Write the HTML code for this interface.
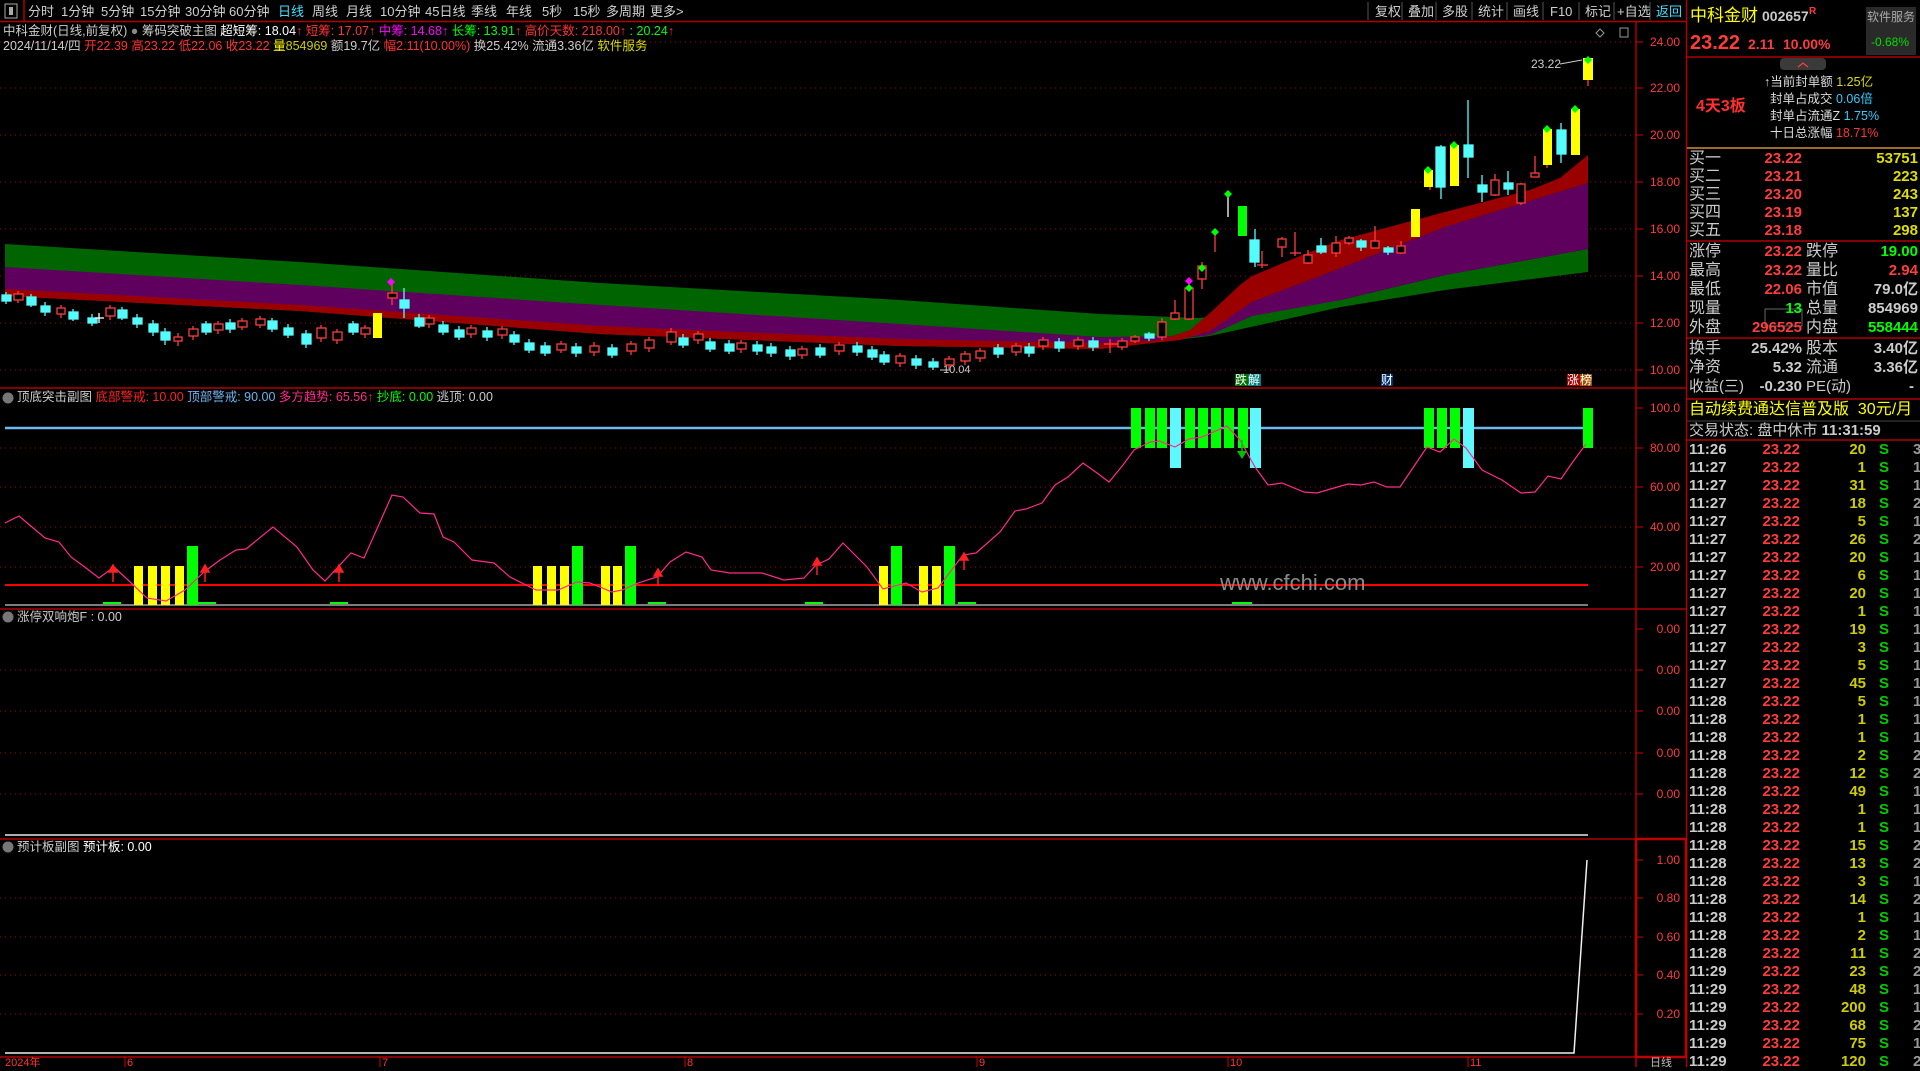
<!DOCTYPE html>
<html><head><meta charset="utf-8">
<style>
*{margin:0;padding:0;box-sizing:border-box}
body{width:1920px;height:1067px;background:#000;overflow:hidden;position:relative;font-family:"Liberation Sans","Noto Sans CJK SC",sans-serif;color:#c8c8c8}
.a{position:absolute;white-space:nowrap;line-height:1}
.m{font-size:13px;top:5px;color:#d0d0d0}
.row{position:absolute;left:1687px;width:233px;height:18px;font-size:15px;line-height:18px;font-weight:bold}
.row span{position:absolute;white-space:nowrap}
.ax{position:absolute;font-size:12px;color:#ff3c3c;right:240px;line-height:1}
</style></head><body>
<svg width="1920" height="1067" style="position:absolute;left:0;top:0">
<g stroke="#b00000" stroke-width="1.5" fill="none">
<line x1="0" y1="21.5" x2="1686" y2="21.5"/>
<line x1="24" y1="0" x2="24" y2="21"/>
<line x1="0" y1="388" x2="1686" y2="388"/>
<line x1="0" y1="609" x2="1686" y2="609"/>
<line x1="0" y1="839" x2="1636" y2="839"/>
<line x1="0" y1="1057" x2="1686" y2="1057"/>
<line x1="1636" y1="22" x2="1636" y2="1067"/>
<line x1="1686.5" y1="0" x2="1686.5" y2="1067"/>
<rect x="1636" y="839" width="50" height="218" stroke="#c00000" stroke-width="2.5"/>
<line x1="1687" y1="57" x2="1920" y2="57"/>
<line x1="1687" y1="241" x2="1920" y2="241"/>
<line x1="1687" y1="338" x2="1920" y2="338"/>
<line x1="1687" y1="399" x2="1920" y2="399"/>
<line x1="1687" y1="440" x2="1920" y2="440"/>
</g>
<line x1="1687" y1="148" x2="1920" y2="148" stroke="#d09030" stroke-width="1.5"/>
<line x1="1687" y1="421" x2="1920" y2="421" stroke="#444" stroke-width="1"/>
<g stroke="#555" stroke-width="1">
<line x1="1368" y1="2" x2="1368" y2="20"/><line x1="1402" y1="2" x2="1402" y2="20"/><line x1="1436" y1="2" x2="1436" y2="20"/><line x1="1472" y1="2" x2="1472" y2="20"/><line x1="1507" y1="2" x2="1507" y2="20"/><line x1="1543" y1="2" x2="1543" y2="20"/><line x1="1579" y1="2" x2="1579" y2="20"/><line x1="1614" y1="2" x2="1614" y2="20"/><line x1="1650" y1="2" x2="1650" y2="20"/>
</g>
<rect x="5" y="4" width="12" height="14" fill="none" stroke="#aaa"/><rect x="9" y="7" width="4" height="8" fill="#aaa"/>
<g stroke="#a00000" stroke-width="1" stroke-dasharray="1,4">
<line x1="0" y1="42" x2="1636" y2="42"/><line x1="0" y1="88" x2="1636" y2="88"/><line x1="0" y1="135" x2="1636" y2="135"/><line x1="0" y1="182" x2="1636" y2="182"/><line x1="0" y1="229" x2="1636" y2="229"/><line x1="0" y1="276" x2="1636" y2="276"/><line x1="0" y1="323" x2="1636" y2="323"/><line x1="0" y1="370" x2="1636" y2="370"/>
<line x1="0" y1="448" x2="1636" y2="448"/><line x1="0" y1="487" x2="1636" y2="487"/><line x1="0" y1="527" x2="1636" y2="527"/><line x1="0" y1="567" x2="1636" y2="567"/>
<line x1="0" y1="670" x2="1636" y2="670"/><line x1="0" y1="711" x2="1636" y2="711"/><line x1="0" y1="753" x2="1636" y2="753"/><line x1="0" y1="794" x2="1636" y2="794"/>
<line x1="0" y1="898" x2="1636" y2="898"/><line x1="0" y1="937" x2="1636" y2="937"/><line x1="0" y1="975" x2="1636" y2="975"/><line x1="0" y1="1014" x2="1636" y2="1014"/>
</g>
<g stroke="#d00000" stroke-width="1">
<line x1="1636" y1="42" x2="1643" y2="42"/><line x1="1636" y1="88" x2="1643" y2="88"/><line x1="1636" y1="135" x2="1643" y2="135"/><line x1="1636" y1="182" x2="1643" y2="182"/><line x1="1636" y1="229" x2="1643" y2="229"/><line x1="1636" y1="276" x2="1643" y2="276"/><line x1="1636" y1="323" x2="1643" y2="323"/><line x1="1636" y1="370" x2="1643" y2="370"/>
<line x1="1636" y1="408" x2="1643" y2="408"/><line x1="1636" y1="448" x2="1643" y2="448"/><line x1="1636" y1="487" x2="1643" y2="487"/><line x1="1636" y1="527" x2="1643" y2="527"/><line x1="1636" y1="567" x2="1643" y2="567"/>
<line x1="1636" y1="629" x2="1643" y2="629"/><line x1="1636" y1="670" x2="1643" y2="670"/><line x1="1636" y1="711" x2="1643" y2="711"/><line x1="1636" y1="753" x2="1643" y2="753"/><line x1="1636" y1="794" x2="1643" y2="794"/>
<line x1="1636" y1="860" x2="1643" y2="860"/><line x1="1636" y1="898" x2="1643" y2="898"/><line x1="1636" y1="937" x2="1643" y2="937"/><line x1="1636" y1="975" x2="1643" y2="975"/><line x1="1636" y1="1014" x2="1643" y2="1014"/>
<line x1="125" y1="1057" x2="125" y2="1067"/><line x1="380" y1="1057" x2="380" y2="1067"/><line x1="685" y1="1057" x2="685" y2="1067"/><line x1="977" y1="1057" x2="977" y2="1067"/><line x1="1228" y1="1057" x2="1228" y2="1067"/><line x1="1468" y1="1057" x2="1468" y2="1067"/>
</g>
<polygon fill="#006400" points="5,244 300,262 600,283 900,300 1100,314 1200,318 1300,305 1341,300 1445,275 1588,249 1588,272 1445,290 1341,307 1210,336 1100,349 900,346 600,334 300,311 5,296"/>
<polygon fill="#5f005f" points="5,267 300,285 600,305 900,324 1100,337 1180,336 1210,330 1252,302 1341,268 1445,227 1588,183 1588,249 1445,275 1341,300 1252,316 1210,335 1100,349 900,346 600,334 300,311 5,296"/>
<polygon fill="#9a0000" points="5,289 300,305 600,326 900,339 1100,343 1160,340 1190,330 1210,313 1240,285 1252,276 1300,256 1341,240 1445,212 1530,190 1560,178 1588,155 1588,183 1445,227 1341,268 1252,302 1210,331 1180,340 1100,349 900,346 600,334 300,311 5,296"/>
<g stroke="#54fcfc" fill="#54fcfc" stroke-width="1.3">
<line x1="6" y1="292" x2="6" y2="304"/><rect x="2" y="295" width="9" height="6"/>
<line x1="31" y1="294" x2="31" y2="307"/><rect x="27" y="297" width="9" height="8"/>
<line x1="45" y1="302" x2="45" y2="316"/><rect x="41" y="306" width="9" height="6"/>
<line x1="73" y1="309" x2="73" y2="321"/><rect x="69" y="312" width="9" height="7"/>
<line x1="92" y1="314" x2="92" y2="326"/><rect x="88" y="318" width="9" height="5"/>
<line x1="122" y1="307" x2="122" y2="320"/><rect x="118" y="310" width="9" height="8"/>
<line x1="137" y1="314" x2="137" y2="328"/><rect x="133" y="318" width="9" height="6"/>
<line x1="153" y1="320" x2="153" y2="336"/><rect x="149" y="324" width="9" height="8"/>
<line x1="165" y1="328" x2="165" y2="345"/><rect x="161" y="332" width="9" height="8"/>
<line x1="206" y1="321" x2="206" y2="335"/><rect x="202" y="324" width="9" height="8"/>
<line x1="230" y1="319" x2="230" y2="333"/><rect x="226" y="323" width="9" height="6"/>
<line x1="272" y1="318" x2="272" y2="332"/><rect x="268" y="321" width="9" height="8"/>
<line x1="288" y1="324" x2="288" y2="338"/><rect x="284" y="328" width="9" height="7"/>
<line x1="306" y1="330" x2="306" y2="348"/><rect x="302" y="334" width="9" height="10"/>
<line x1="353" y1="321" x2="353" y2="335"/><rect x="349" y="324" width="9" height="8"/>
<line x1="404" y1="288" x2="404" y2="318"/><rect x="400" y="300" width="9" height="8"/>
<line x1="419" y1="314" x2="419" y2="328"/><rect x="415" y="318" width="9" height="8"/>
<line x1="443" y1="321" x2="443" y2="335"/><rect x="439" y="325" width="9" height="7"/>
<line x1="459" y1="326" x2="459" y2="340"/><rect x="455" y="330" width="9" height="7"/>
<line x1="487" y1="327" x2="487" y2="341"/><rect x="483" y="331" width="9" height="6"/>
<line x1="514" y1="331" x2="514" y2="345"/><rect x="510" y="335" width="9" height="7"/>
<line x1="529" y1="339" x2="529" y2="353"/><rect x="525" y="343" width="9" height="7"/>
<line x1="545" y1="342" x2="545" y2="356"/><rect x="541" y="346" width="9" height="7"/>
<line x1="576" y1="343" x2="576" y2="357"/><rect x="572" y="347" width="9" height="6"/>
<line x1="612" y1="344" x2="612" y2="358"/><rect x="608" y="348" width="9" height="7"/>
<line x1="683" y1="334" x2="683" y2="348"/><rect x="679" y="338" width="9" height="7"/>
<line x1="710" y1="338" x2="710" y2="352"/><rect x="706" y="342" width="9" height="7"/>
<line x1="729" y1="340" x2="729" y2="354"/><rect x="725" y="344" width="9" height="7"/>
<line x1="757" y1="341" x2="757" y2="355"/><rect x="753" y="345" width="9" height="6"/>
<line x1="771" y1="343" x2="771" y2="357"/><rect x="767" y="347" width="9" height="6"/>
<line x1="790" y1="346" x2="790" y2="360"/><rect x="786" y="350" width="9" height="6"/>
<line x1="820" y1="344" x2="820" y2="358"/><rect x="816" y="348" width="9" height="7"/>
<line x1="857" y1="342" x2="857" y2="356"/><rect x="853" y="346" width="9" height="6"/>
<line x1="872" y1="346" x2="872" y2="360"/><rect x="868" y="350" width="9" height="7"/>
<line x1="884" y1="351" x2="884" y2="365"/><rect x="880" y="355" width="9" height="7"/>
<line x1="916" y1="355" x2="916" y2="369"/><rect x="912" y="359" width="9" height="6"/>
<line x1="933" y1="358" x2="933" y2="370"/><rect x="929" y="362" width="9" height="5"/>
<line x1="998" y1="344" x2="998" y2="358"/><rect x="994" y="348" width="9" height="6"/>
<line x1="1029" y1="343" x2="1029" y2="357"/><rect x="1025" y="347" width="9" height="6"/>
<line x1="1059" y1="338" x2="1059" y2="352"/><rect x="1055" y="342" width="9" height="6"/>
<line x1="1093" y1="337" x2="1093" y2="351"/><rect x="1089" y="341" width="9" height="6"/>
<line x1="1149" y1="332" x2="1149" y2="341"/><rect x="1145" y="334" width="9" height="4"/>
<line x1="1255" y1="229" x2="1255" y2="267"/><rect x="1250" y="240" width="9" height="22"/>
<line x1="1321" y1="238" x2="1321" y2="254"/><rect x="1317" y="246" width="9" height="6"/>
<line x1="1361" y1="239" x2="1361" y2="251"/><rect x="1357" y="241" width="9" height="6"/>
<line x1="1388" y1="246" x2="1388" y2="255"/><rect x="1384" y="248" width="9" height="4"/>
<line x1="1441" y1="145" x2="1441" y2="199"/><rect x="1436" y="147" width="9" height="40"/>
<line x1="1468" y1="100" x2="1468" y2="178"/><rect x="1464" y="145" width="9" height="12"/>
<line x1="1482" y1="175" x2="1482" y2="202"/><rect x="1478" y="185" width="9" height="7"/>
<line x1="1508" y1="171" x2="1508" y2="195"/><rect x="1504" y="183" width="9" height="6"/>
<line x1="1561" y1="123" x2="1561" y2="163"/><rect x="1557" y="130" width="9" height="24"/>
</g>
<g stroke="#ff3c3c" fill="#000" stroke-width="1.3">
<line x1="18" y1="291" x2="18" y2="303"/><rect x="14" y="294" width="9" height="6"/>
<line x1="61" y1="305" x2="61" y2="318"/><rect x="57" y="308" width="8" height="6"/>
<line x1="110" y1="305" x2="110" y2="320"/><rect x="106" y="308" width="9" height="8"/>
<line x1="178" y1="333" x2="178" y2="346"/><rect x="174" y="337" width="8" height="4"/>
<line x1="193" y1="326" x2="193" y2="340"/><rect x="189" y="329" width="9" height="7"/>
<line x1="218" y1="321" x2="218" y2="334"/><rect x="214" y="324" width="9" height="6"/>
<line x1="242" y1="318" x2="242" y2="330"/><rect x="238" y="321" width="9" height="6"/>
<line x1="260" y1="316" x2="260" y2="328"/><rect x="256" y="319" width="9" height="6"/>
<line x1="321" y1="325" x2="321" y2="342"/><rect x="317" y="328" width="9" height="10"/>
<line x1="337" y1="329" x2="337" y2="344"/><rect x="333" y="332" width="9" height="8"/>
<line x1="365" y1="325" x2="365" y2="338"/><rect x="361" y="328" width="9" height="6"/>
<line x1="392" y1="282" x2="392" y2="305"/><rect x="388" y="293" width="9" height="5"/>
<line x1="429" y1="315" x2="429" y2="328"/><rect x="425" y="318" width="9" height="6"/>
<line x1="471" y1="325" x2="471" y2="338"/><rect x="467" y="328" width="9" height="6"/>
<line x1="502" y1="326" x2="502" y2="339"/><rect x="498" y="329" width="9" height="6"/>
<line x1="561" y1="341" x2="561" y2="353"/><rect x="557" y="344" width="9" height="6"/>
<line x1="594" y1="342" x2="594" y2="356"/><rect x="590" y="346" width="9" height="6"/>
<line x1="631" y1="341" x2="631" y2="355"/><rect x="627" y="344" width="9" height="7"/>
<line x1="649" y1="337" x2="649" y2="352"/><rect x="645" y="340" width="9" height="8"/>
<line x1="671" y1="328" x2="671" y2="345"/><rect x="667" y="332" width="9" height="10"/>
<line x1="698" y1="331" x2="698" y2="344"/><rect x="694" y="334" width="9" height="6"/>
<line x1="741" y1="340" x2="741" y2="353"/><rect x="737" y="343" width="9" height="6"/>
<line x1="802" y1="346" x2="802" y2="359"/><rect x="798" y="349" width="9" height="6"/>
<line x1="839" y1="342" x2="839" y2="355"/><rect x="835" y="345" width="9" height="6"/>
<line x1="900" y1="353" x2="900" y2="367"/><rect x="896" y="356" width="9" height="7"/>
<line x1="949" y1="356" x2="949" y2="369"/><rect x="945" y="359" width="9" height="6"/>
<line x1="965" y1="351" x2="965" y2="365"/><rect x="961" y="354" width="9" height="7"/>
<line x1="980" y1="348" x2="980" y2="362"/><rect x="976" y="351" width="9" height="7"/>
<line x1="1016" y1="343" x2="1016" y2="356"/><rect x="1012" y="346" width="9" height="6"/>
<line x1="1043" y1="337" x2="1043" y2="350"/><rect x="1039" y="340" width="9" height="6"/>
<line x1="1078" y1="337" x2="1078" y2="350"/><rect x="1074" y="340" width="9" height="6"/>
<line x1="1104" y1="344" x2="1118" y2="344"/><line x1="1110" y1="339" x2="1110" y2="353"/>
<line x1="1122" y1="338" x2="1122" y2="350"/><rect x="1118" y="341" width="9" height="6"/>
<line x1="1135" y1="335" x2="1135" y2="343"/><rect x="1131" y="337" width="8" height="4"/>
<line x1="1162" y1="318" x2="1162" y2="340"/><rect x="1158" y="322" width="8" height="15"/>
<line x1="1175" y1="300" x2="1175" y2="320"/><rect x="1171" y="313" width="8" height="6"/>
<line x1="1189" y1="282" x2="1189" y2="320"/><rect x="1185" y="288" width="8" height="31"/>
<line x1="1202" y1="262" x2="1202" y2="289"/><rect x="1198" y="266" width="8" height="13"/>
<line x1="1215" y1="232" x2="1215" y2="252"/>
<line x1="1262" y1="251" x2="1262" y2="268"/><line x1="1257" y1="265" x2="1268" y2="265"/>
<line x1="1282" y1="237" x2="1282" y2="257"/><rect x="1278" y="239" width="8" height="8"/>
<line x1="1295" y1="232" x2="1295" y2="256"/><line x1="1290" y1="253" x2="1301" y2="253"/>
<line x1="1308" y1="250" x2="1308" y2="264"/><rect x="1304" y="255" width="8" height="8"/>
<line x1="1336" y1="236" x2="1336" y2="257"/><rect x="1332" y="243" width="8" height="10"/>
<line x1="1349" y1="236" x2="1349" y2="245"/><rect x="1345" y="238" width="8" height="5"/>
<line x1="1375" y1="226" x2="1375" y2="248"/><rect x="1371" y="241" width="8" height="7"/>
<line x1="1401" y1="241" x2="1401" y2="254"/><rect x="1397" y="246" width="8" height="7"/>
<line x1="1495" y1="174" x2="1495" y2="196"/><rect x="1491" y="180" width="8" height="15"/>
<line x1="1521" y1="183" x2="1521" y2="205"/><rect x="1517" y="184" width="8" height="19"/>
<line x1="1535" y1="156" x2="1535" y2="177"/><rect x="1531" y="173" width="8" height="4"/>
<line x1="1430" y1="186" x2="1430" y2="190"/><line x1="1588" y1="78" x2="1588" y2="86"/><line x1="1547" y1="164" x2="1547" y2="168"/>
</g>
<line x1="95" y1="318" x2="104" y2="318" stroke="#fff" stroke-width="1.3"/><line x1="99" y1="313" x2="99" y2="323" stroke="#fff" stroke-width="1.3"/>
<line x1="1228" y1="193" x2="1228" y2="217" stroke="#fff" stroke-width="1.3"/>
<g fill="#ffff00">
<rect x="373" y="313" width="9" height="25"/>
<rect x="1411" y="209" width="9" height="28"/>
<rect x="1424" y="170" width="9" height="17"/>
<rect x="1450" y="145" width="9" height="41"/>
<rect x="1543" y="129" width="9" height="36"/>
<rect x="1571" y="109" width="9" height="46"/>
<rect x="1583" y="58" width="10" height="22"/>
</g>
<rect x="1238" y="206" width="9" height="30" fill="#00ff00"/>
<g fill="#00ff00">
<polygon points="1189,284 1193,288 1189,292 1185,288"/><polygon points="1202,264 1206,268 1202,272 1198,268"/><polygon points="1215,228 1219,232 1215,236 1211,232"/><polygon points="1228,190 1232,194 1228,198 1224,194"/><polygon points="1428,166 1432,170 1428,174 1424,170"/><polygon points="1454,141 1458,145 1454,149 1450,145"/><polygon points="1547,125 1551,129 1547,133 1543,129"/><polygon points="1575,105 1579,109 1575,113 1571,109"/><polygon points="1588,56 1592,60 1588,64 1584,60"/>
</g>
<g fill="#ff00ff"><polygon points="1189,277 1193,281 1189,285 1185,281"/><polygon points="391,278 395,282 391,286 387,282"/></g>
<line x1="1560" y1="64" x2="1582" y2="60" stroke="#ccc" stroke-width="1"/>
<line x1="940" y1="370" x2="950" y2="370" stroke="#ccc" stroke-width="1"/>
<line x1="5" y1="428" x2="1590" y2="428" stroke="#6fb8f0" stroke-width="2.5"/>
<line x1="5" y1="585" x2="1588" y2="585" stroke="#ff0000" stroke-width="2"/>
<line x1="5" y1="605" x2="1588" y2="605" stroke="#c8c8c8" stroke-width="1.3"/>
<g fill="#00ff00"><rect x="103" y="602" width="18" height="2"/><rect x="198" y="602" width="18" height="2"/><rect x="330" y="602" width="18" height="2"/><rect x="648" y="602" width="18" height="2"/><rect x="805" y="602" width="18" height="2"/><rect x="958" y="602" width="18" height="2"/><rect x="1232" y="602" width="20" height="2"/></g>
<g fill="#ffff00">
<rect x="134" y="566" width="9" height="39"/><rect x="148" y="566" width="9" height="39"/><rect x="161" y="566" width="9" height="39"/><rect x="175" y="566" width="9" height="39"/>
<rect x="533" y="566" width="9" height="39"/><rect x="547" y="566" width="9" height="39"/><rect x="560" y="566" width="9" height="39"/><rect x="601" y="566" width="9" height="39"/><rect x="613" y="566" width="9" height="39"/>
<rect x="879" y="566" width="9" height="39"/><rect x="919" y="566" width="9" height="39"/><rect x="932" y="566" width="9" height="39"/>
</g>
<g fill="#00ff00">
<rect x="187" y="546" width="11" height="59"/><rect x="572" y="546" width="11" height="59"/><rect x="625" y="546" width="11" height="59"/><rect x="891" y="546" width="11" height="59"/><rect x="944" y="546" width="11" height="59"/>
<rect x="1131" y="408" width="10" height="40"/><rect x="1145" y="408" width="10" height="40"/><rect x="1157" y="408" width="10" height="40"/><rect x="1185" y="408" width="10" height="40"/><rect x="1198" y="408" width="10" height="40"/><rect x="1211" y="408" width="10" height="40"/><rect x="1224" y="408" width="10" height="40"/><rect x="1238" y="408" width="10" height="40"/>
<rect x="1424" y="408" width="10" height="40"/><rect x="1437" y="408" width="10" height="40"/><rect x="1450" y="408" width="10" height="40"/><rect x="1583" y="408" width="10" height="40"/>
</g>
<g fill="#5ff8ff"><rect x="1170" y="408" width="11" height="60"/><rect x="1250" y="408" width="11" height="60"/><rect x="1463" y="408" width="11" height="60"/></g>
<polyline fill="none" stroke="#ff2a8a" stroke-width="1.2" points="5,523 19,516 32,527 45,538 59,542 71,557 86,568 99,578 114,567 128,580 147,598 166,601 185,590 204,572 220,560 236,550 246,549 273,527 297,547 313,570 325,581 351,553 364,558 392,495 403,497 420,513 434,514 443,537 454,542 472,560 494,563 510,577 536,590 558,590 577,582 590,583 612,592 622,590 638,583 657,577 670,562 686,552 702,557 711,570 730,573 762,573 784,580 804,578 816,565 829,559 843,543 867,567 883,589 906,583 922,592 938,588 963,555 976,553 1000,532 1015,511 1026,509 1042,503 1055,485 1068,477 1083,463 1097,473 1109,482 1123,465 1134,450 1150,442 1159,441 1175,447 1189,439 1202,437 1227,426 1240,440 1255,467 1268,485 1282,483 1304,492 1317,493 1334,488 1348,484 1361,485 1374,482 1387,487 1400,487 1427,447 1440,452 1454,439 1466,448 1482,470 1502,480 1521,493 1535,492 1548,476 1561,479 1572,463 1586,444"/>
<g stroke="#ff2020" fill="#ff2020" stroke-width="1.5">
<line x1="113" y1="571" x2="113" y2="582"/><polygon points="113,565 109,572 117,572"/>
<line x1="205" y1="571" x2="205" y2="582"/><polygon points="205,565 201,572 209,572"/>
<line x1="339" y1="571" x2="339" y2="582"/><polygon points="339,565 335,572 343,572"/>
<line x1="658" y1="575" x2="658" y2="586"/><polygon points="658,569 654,576 662,576"/>
<line x1="817" y1="564" x2="817" y2="575"/><polygon points="817,558 813,565 821,565"/>
<line x1="964" y1="559" x2="964" y2="570"/><polygon points="964,553 960,560 968,560"/>
</g>
<line x1="1242" y1="440" x2="1242" y2="452" stroke="#00c000" stroke-width="1.5"/><polygon points="1242,459 1237,451 1247,451" fill="#00c000"/>
<line x1="5" y1="835" x2="1588" y2="835" stroke="#e8e8e8" stroke-width="1.5"/>
<polyline fill="none" stroke="#f0f0f0" stroke-width="1.5" points="5,1053 1574,1053 1587,860"/>
<rect x="1866" y="7" width="50" height="48" fill="#2a2a2a"/>
<rect x="1780" y="58" width="46" height="12" rx="4" fill="#3a3a3a"/>
<polyline points="1798,67 1803,63 1808,67" fill="none" stroke="#ff3c3c" stroke-width="1.2"/>
<rect x="1765" y="309" width="37" height="17" fill="none" stroke="#666"/>
<circle cx="8" cy="398" r="5.5" fill="#777"/><circle cx="8" cy="617" r="5.5" fill="#777"/><circle cx="8" cy="847" r="5.5" fill="#777"/>
<polygon points="1600,29 1604,33 1600,37 1596,33" fill="none" stroke="#999"/>
<rect x="1620" y="28" width="8" height="9" fill="none" stroke="#999"/>
</svg>

<div class="a m" style="left:28px">分时</div><div class="a m" style="left:61px">1分钟</div><div class="a m" style="left:101px">5分钟</div><div class="a m" style="left:140px">15分钟</div><div class="a m" style="left:185px">30分钟</div><div class="a m" style="left:229px">60分钟</div><div class="a m" style="left:278px;color:#40e0ff">日线</div><div class="a m" style="left:312px">周线</div><div class="a m" style="left:346px">月线</div><div class="a m" style="left:380px">10分钟</div><div class="a m" style="left:425px">45日线</div><div class="a m" style="left:471px">季线</div><div class="a m" style="left:506px">年线</div><div class="a m" style="left:542px">5秒</div><div class="a m" style="left:573px">15秒</div><div class="a m" style="left:606px">多周期</div><div class="a m" style="left:650px">更多&gt;</div>
<div class="a m" style="left:1375px">复权</div><div class="a m" style="left:1408px">叠加</div><div class="a m" style="left:1442px">多股</div><div class="a m" style="left:1478px">统计</div><div class="a m" style="left:1513px">画线</div><div class="a m" style="left:1550px">F10</div><div class="a m" style="left:1585px">标记</div><div class="a m" style="left:1617px">+自选</div><div class="a m" style="left:1656px;color:#40e0ff">返回</div>

<div class="a" style="left:3px;top:25px;font-size:12.5px;color:#ccc">中科金财(日线,前复权) <span style="color:#888">●</span> 筹码突破主图 <span style="color:#fff">超短筹: 18.04</span><span style="color:#f33">↑</span> <span style="color:#f33">短筹: 17.07↑</span> <span style="color:#f0f">中筹: 14.68↑</span> <span style="color:#0f0">长筹: 13.91</span><span style="color:#f33">↑</span> <span style="color:#f33">高价天数: 218.00↑</span> <span style="color:#0f0">: 20.24</span><span style="color:#f33">↑</span></div>
<div class="a" style="left:3px;top:40px;font-size:12.5px;color:#ccc">2024/11/14/四 <span style="color:#f33">开22.39 高23.22 低22.06 收23.22</span> <span style="color:#ff0">量</span><span style="color:#cc0">854969</span> 额19.7亿 <span style="color:#f33">幅2.11(10.00%)</span> 换25.42% 流通3.36亿 <span style="color:#dd0">软件服务</span></div>

<div class="a" style="left:1531px;top:58px;font-size:12px;color:#ccc">23.22</div>
<div class="a" style="left:943px;top:365px;font-size:11px;color:#ccc">10.04</div>
<div class="a" style="left:1235px;top:374px;font-size:12px;color:#fff;background:#007000;width:13px">跌</div><div class="a" style="left:1248px;top:374px;font-size:12px;color:#fff;background:#008080;width:13px">解</div>
<div class="a" style="left:1381px;top:374px;font-size:12px;color:#fff;background:#003070">财</div>
<div class="a" style="left:1567px;top:374px;font-size:12px;color:#fff;background:#a00000;width:13px">涨</div><div class="a" style="left:1580px;top:374px;font-size:12px;color:#fff;background:#a05000">榜</div>

<div class="a" style="left:17px;top:391px;font-size:12.5px;color:#ccc">顶底突击副图 <span style="color:#f22">底部警戒: 10.00</span> <span style="color:#6ab4f0">顶部警戒: 90.00</span> <span style="color:#ff2a8a">多方趋势: 65.56</span><span style="color:#f22">↑</span> <span style="color:#0f0">抄底: 0.00</span> 逃顶: 0.00</div>
<div class="a" style="left:1220px;top:572px;font-size:22px;color:#8a8a8a">www.cfchi.com</div>
<div class="a" style="left:17px;top:611px;font-size:12.5px;color:#ccc">涨停双响炮F : 0.00</div>
<div class="a" style="left:17px;top:841px;font-size:12.5px;color:#ccc">预计板副图 <span style="color:#fff">预计板: 0.00</span></div>

<div class="ax" style="top:36px">24.00</div><div class="ax" style="top:82px">22.00</div><div class="ax" style="top:129px">20.00</div><div class="ax" style="top:176px">18.00</div><div class="ax" style="top:223px">16.00</div><div class="ax" style="top:270px">14.00</div><div class="ax" style="top:317px">12.00</div><div class="ax" style="top:364px">10.00</div>
<div class="ax" style="top:402px">100.0</div><div class="ax" style="top:442px">80.00</div><div class="ax" style="top:481px">60.00</div><div class="ax" style="top:521px">40.00</div><div class="ax" style="top:561px">20.00</div>
<div class="ax" style="top:623px">0.00</div><div class="ax" style="top:664px">0.00</div><div class="ax" style="top:705px">0.00</div><div class="ax" style="top:747px">0.00</div><div class="ax" style="top:788px">0.00</div>
<div class="ax" style="top:854px">1.00</div><div class="ax" style="top:892px">0.80</div><div class="ax" style="top:931px">0.60</div><div class="ax" style="top:969px">0.40</div><div class="ax" style="top:1008px">0.20</div>
<div class="a" style="left:5px;top:1058px;font-size:11px;color:#f33">2024年</div><div class="a" style="left:127px;top:1058px;font-size:11px;color:#f33">6</div><div class="a" style="left:382px;top:1058px;font-size:11px;color:#f33">7</div><div class="a" style="left:687px;top:1058px;font-size:11px;color:#f33">8</div><div class="a" style="left:979px;top:1058px;font-size:11px;color:#f33">9</div><div class="a" style="left:1230px;top:1058px;font-size:11px;color:#f33">10</div><div class="a" style="left:1470px;top:1058px;font-size:11px;color:#f33">11</div><div class="a" style="left:1650px;top:1058px;font-size:11px;color:#bbb">日线</div>

<div class="a" style="left:1690px;top:7px;font-size:17px;color:#ffff00">中科金财</div>
<div class="a" style="left:1762px;top:9px;font-size:14px;font-weight:bold;color:#c8c8c8">002657</div>
<div class="a" style="left:1809px;top:7px;font-size:10px;font-weight:bold;color:#ff3c3c">R</div>
<div class="a" style="left:1867px;top:11px;font-size:12px;color:#aaa">软件服务</div>
<div class="a" style="left:1871px;top:36px;font-size:12px;color:#00e000">-0.68%</div>
<div class="a" style="left:1690px;top:33px;font-size:20px;font-weight:bold;color:#ff3c3c">23.22</div>
<div class="a" style="left:1748px;top:37px;font-size:14px;font-weight:bold;color:#ff3c3c">2.11</div>
<div class="a" style="left:1783px;top:37px;font-size:14px;font-weight:bold;color:#ff3c3c">10.00%</div>
<div class="a" style="left:1696px;top:99px;font-size:16px;font-weight:bold;color:#ff3030">4天3板</div>
<div class="a" style="left:1764px;top:76px;font-size:12.5px;color:#ddd">↑当前封单额 <span style="color:#dd0">1.25亿</span></div>
<div class="a" style="left:1770px;top:93px;font-size:12.5px;color:#ddd">封单占成交 <span style="color:#3cf">0.06倍</span></div>
<div class="a" style="left:1770px;top:110px;font-size:12.5px;color:#ddd">封单占流通Z <span style="color:#3cf">1.75%</span></div>
<div class="a" style="left:1770px;top:127px;font-size:12.5px;color:#ddd">十日总涨幅 <span style="color:#f33">18.71%</span></div>

<div class="row" style="top:150px"><span style="left:2px;color:#ccc;font-weight:normal;font-size:16px">买一</span><span style="right:118px;color:#ff3c3c">23.22</span><span style="right:2px;color:#dd0">53751</span></div>
<div class="row" style="top:168px"><span style="left:2px;color:#ccc;font-weight:normal;font-size:16px">买二</span><span style="right:118px;color:#ff3c3c">23.21</span><span style="right:2px;color:#dd0">223</span></div>
<div class="row" style="top:186px"><span style="left:2px;color:#ccc;font-weight:normal;font-size:16px">买三</span><span style="right:118px;color:#ff3c3c">23.20</span><span style="right:2px;color:#dd0">243</span></div>
<div class="row" style="top:204px"><span style="left:2px;color:#ccc;font-weight:normal;font-size:16px">买四</span><span style="right:118px;color:#ff3c3c">23.19</span><span style="right:2px;color:#dd0">137</span></div>
<div class="row" style="top:222px"><span style="left:2px;color:#ccc;font-weight:normal;font-size:16px">买五</span><span style="right:118px;color:#ff3c3c">23.18</span><span style="right:2px;color:#dd0">298</span></div>

<div class="row" style="top:243px"><span style="left:2px;color:#ccc;font-weight:normal;font-size:16px">涨停</span><span style="right:118px;color:#ff3c3c">23.22</span><span style="left:119px;color:#ccc;font-weight:normal;font-size:16px">跌停</span><span style="right:2px;color:#0f0">19.00</span></div>
<div class="row" style="top:262px"><span style="left:2px;color:#ccc;font-weight:normal;font-size:16px">最高</span><span style="right:118px;color:#ff3c3c">23.22</span><span style="left:119px;color:#ccc;font-weight:normal;font-size:16px">量比</span><span style="right:2px;color:#ff3c3c">2.94</span></div>
<div class="row" style="top:281px"><span style="left:2px;color:#ccc;font-weight:normal;font-size:16px">最低</span><span style="right:118px;color:#ff3c3c">22.06</span><span style="left:119px;color:#ccc;font-weight:normal;font-size:16px">市值</span><span style="right:2px;color:#ccc">79.0亿</span></div>
<div class="row" style="top:300px"><span style="left:2px;color:#ccc;font-weight:normal;font-size:16px">现量</span><span style="right:118px;color:#0f0">13</span><span style="left:119px;color:#ccc;font-weight:normal;font-size:16px">总量</span><span style="right:2px;color:#ccc">854969</span></div>
<div class="row" style="top:319px"><span style="left:2px;color:#ccc;font-weight:normal;font-size:16px">外盘</span><span style="right:118px;color:#ff3c3c">296525</span><span style="left:119px;color:#ccc;font-weight:normal;font-size:16px">内盘</span><span style="right:2px;color:#0f0">558444</span></div>

<div class="row" style="top:340px"><span style="left:2px;color:#ccc;font-weight:normal;font-size:16px">换手</span><span style="right:118px;color:#ccc">25.42%</span><span style="left:119px;color:#ccc;font-weight:normal;font-size:16px">股本</span><span style="right:2px;color:#ccc">3.40亿</span></div>
<div class="row" style="top:359px"><span style="left:2px;color:#ccc;font-weight:normal;font-size:16px">净资</span><span style="right:118px;color:#ccc">5.32</span><span style="left:119px;color:#ccc;font-weight:normal;font-size:16px">流通</span><span style="right:2px;color:#ccc">3.36亿</span></div>
<div class="row" style="top:378px"><span style="left:2px;color:#ccc;font-weight:normal;font-size:15px">收益(三)</span><span style="right:118px;color:#ccc">-0.230</span><span style="left:119px;color:#ccc;font-weight:normal;font-size:15px">PE(动)</span><span style="right:6px;color:#ccc">-</span></div>
<div class="a" style="left:1689px;top:402px;font-size:16px;color:#ff0">自动续费通达信普及版 &nbsp;30元/月</div>
<div class="a" style="left:1689px;top:423px;font-size:15px;color:#ccc">交易状态: 盘中休市 <b>11:31:59</b></div>

<div class="row" style="top:441px"><span style="left:2px;color:#ccc">11:26</span><span style="right:120px;color:#ff3c3c">23.22</span><span style="right:54px;color:#cc0">20</span><span style="left:192px;color:#0c0">S</span><span style="left:226px;color:#999">3</span></div>
<div class="row" style="top:459px"><span style="left:2px;color:#ccc">11:27</span><span style="right:120px;color:#ff3c3c">23.22</span><span style="right:54px;color:#cc0">1</span><span style="left:192px;color:#0c0">S</span><span style="left:226px;color:#999">1</span></div>
<div class="row" style="top:477px"><span style="left:2px;color:#ccc">11:27</span><span style="right:120px;color:#ff3c3c">23.22</span><span style="right:54px;color:#cc0">31</span><span style="left:192px;color:#0c0">S</span><span style="left:226px;color:#999">1</span></div>
<div class="row" style="top:495px"><span style="left:2px;color:#ccc">11:27</span><span style="right:120px;color:#ff3c3c">23.22</span><span style="right:54px;color:#cc0">18</span><span style="left:192px;color:#0c0">S</span><span style="left:226px;color:#999">2</span></div>
<div class="row" style="top:513px"><span style="left:2px;color:#ccc">11:27</span><span style="right:120px;color:#ff3c3c">23.22</span><span style="right:54px;color:#cc0">5</span><span style="left:192px;color:#0c0">S</span><span style="left:226px;color:#999">1</span></div>
<div class="row" style="top:531px"><span style="left:2px;color:#ccc">11:27</span><span style="right:120px;color:#ff3c3c">23.22</span><span style="right:54px;color:#cc0">26</span><span style="left:192px;color:#0c0">S</span><span style="left:226px;color:#999">2</span></div>
<div class="row" style="top:549px"><span style="left:2px;color:#ccc">11:27</span><span style="right:120px;color:#ff3c3c">23.22</span><span style="right:54px;color:#cc0">20</span><span style="left:192px;color:#0c0">S</span><span style="left:226px;color:#999">1</span></div>
<div class="row" style="top:567px"><span style="left:2px;color:#ccc">11:27</span><span style="right:120px;color:#ff3c3c">23.22</span><span style="right:54px;color:#cc0">6</span><span style="left:192px;color:#0c0">S</span><span style="left:226px;color:#999">1</span></div>
<div class="row" style="top:585px"><span style="left:2px;color:#ccc">11:27</span><span style="right:120px;color:#ff3c3c">23.22</span><span style="right:54px;color:#cc0">20</span><span style="left:192px;color:#0c0">S</span><span style="left:226px;color:#999">1</span></div>
<div class="row" style="top:603px"><span style="left:2px;color:#ccc">11:27</span><span style="right:120px;color:#ff3c3c">23.22</span><span style="right:54px;color:#cc0">1</span><span style="left:192px;color:#0c0">S</span><span style="left:226px;color:#999">1</span></div>
<div class="row" style="top:621px"><span style="left:2px;color:#ccc">11:27</span><span style="right:120px;color:#ff3c3c">23.22</span><span style="right:54px;color:#cc0">19</span><span style="left:192px;color:#0c0">S</span><span style="left:226px;color:#999">1</span></div>
<div class="row" style="top:639px"><span style="left:2px;color:#ccc">11:27</span><span style="right:120px;color:#ff3c3c">23.22</span><span style="right:54px;color:#cc0">3</span><span style="left:192px;color:#0c0">S</span><span style="left:226px;color:#999">1</span></div>
<div class="row" style="top:657px"><span style="left:2px;color:#ccc">11:27</span><span style="right:120px;color:#ff3c3c">23.22</span><span style="right:54px;color:#cc0">5</span><span style="left:192px;color:#0c0">S</span><span style="left:226px;color:#999">1</span></div>
<div class="row" style="top:675px"><span style="left:2px;color:#ccc">11:27</span><span style="right:120px;color:#ff3c3c">23.22</span><span style="right:54px;color:#cc0">45</span><span style="left:192px;color:#0c0">S</span><span style="left:226px;color:#999">1</span></div>
<div class="row" style="top:693px"><span style="left:2px;color:#ccc">11:28</span><span style="right:120px;color:#ff3c3c">23.22</span><span style="right:54px;color:#cc0">5</span><span style="left:192px;color:#0c0">S</span><span style="left:226px;color:#999">1</span></div>
<div class="row" style="top:711px"><span style="left:2px;color:#ccc">11:28</span><span style="right:120px;color:#ff3c3c">23.22</span><span style="right:54px;color:#cc0">1</span><span style="left:192px;color:#0c0">S</span><span style="left:226px;color:#999">1</span></div>
<div class="row" style="top:729px"><span style="left:2px;color:#ccc">11:28</span><span style="right:120px;color:#ff3c3c">23.22</span><span style="right:54px;color:#cc0">1</span><span style="left:192px;color:#0c0">S</span><span style="left:226px;color:#999">1</span></div>
<div class="row" style="top:747px"><span style="left:2px;color:#ccc">11:28</span><span style="right:120px;color:#ff3c3c">23.22</span><span style="right:54px;color:#cc0">2</span><span style="left:192px;color:#0c0">S</span><span style="left:226px;color:#999">2</span></div>
<div class="row" style="top:765px"><span style="left:2px;color:#ccc">11:28</span><span style="right:120px;color:#ff3c3c">23.22</span><span style="right:54px;color:#cc0">12</span><span style="left:192px;color:#0c0">S</span><span style="left:226px;color:#999">2</span></div>
<div class="row" style="top:783px"><span style="left:2px;color:#ccc">11:28</span><span style="right:120px;color:#ff3c3c">23.22</span><span style="right:54px;color:#cc0">49</span><span style="left:192px;color:#0c0">S</span><span style="left:226px;color:#999">1</span></div>
<div class="row" style="top:801px"><span style="left:2px;color:#ccc">11:28</span><span style="right:120px;color:#ff3c3c">23.22</span><span style="right:54px;color:#cc0">1</span><span style="left:192px;color:#0c0">S</span><span style="left:226px;color:#999">1</span></div>
<div class="row" style="top:819px"><span style="left:2px;color:#ccc">11:28</span><span style="right:120px;color:#ff3c3c">23.22</span><span style="right:54px;color:#cc0">1</span><span style="left:192px;color:#0c0">S</span><span style="left:226px;color:#999">1</span></div>
<div class="row" style="top:837px"><span style="left:2px;color:#ccc">11:28</span><span style="right:120px;color:#ff3c3c">23.22</span><span style="right:54px;color:#cc0">15</span><span style="left:192px;color:#0c0">S</span><span style="left:226px;color:#999">2</span></div>
<div class="row" style="top:855px"><span style="left:2px;color:#ccc">11:28</span><span style="right:120px;color:#ff3c3c">23.22</span><span style="right:54px;color:#cc0">13</span><span style="left:192px;color:#0c0">S</span><span style="left:226px;color:#999">2</span></div>
<div class="row" style="top:873px"><span style="left:2px;color:#ccc">11:28</span><span style="right:120px;color:#ff3c3c">23.22</span><span style="right:54px;color:#cc0">3</span><span style="left:192px;color:#0c0">S</span><span style="left:226px;color:#999">1</span></div>
<div class="row" style="top:891px"><span style="left:2px;color:#ccc">11:28</span><span style="right:120px;color:#ff3c3c">23.22</span><span style="right:54px;color:#cc0">14</span><span style="left:192px;color:#0c0">S</span><span style="left:226px;color:#999">2</span></div>
<div class="row" style="top:909px"><span style="left:2px;color:#ccc">11:28</span><span style="right:120px;color:#ff3c3c">23.22</span><span style="right:54px;color:#cc0">1</span><span style="left:192px;color:#0c0">S</span><span style="left:226px;color:#999">1</span></div>
<div class="row" style="top:927px"><span style="left:2px;color:#ccc">11:28</span><span style="right:120px;color:#ff3c3c">23.22</span><span style="right:54px;color:#cc0">2</span><span style="left:192px;color:#0c0">S</span><span style="left:226px;color:#999">1</span></div>
<div class="row" style="top:945px"><span style="left:2px;color:#ccc">11:28</span><span style="right:120px;color:#ff3c3c">23.22</span><span style="right:54px;color:#cc0">11</span><span style="left:192px;color:#0c0">S</span><span style="left:226px;color:#999">2</span></div>
<div class="row" style="top:963px"><span style="left:2px;color:#ccc">11:29</span><span style="right:120px;color:#ff3c3c">23.22</span><span style="right:54px;color:#cc0">23</span><span style="left:192px;color:#0c0">S</span><span style="left:226px;color:#999">2</span></div>
<div class="row" style="top:981px"><span style="left:2px;color:#ccc">11:29</span><span style="right:120px;color:#ff3c3c">23.22</span><span style="right:54px;color:#cc0">48</span><span style="left:192px;color:#0c0">S</span><span style="left:226px;color:#999">1</span></div>
<div class="row" style="top:999px"><span style="left:2px;color:#ccc">11:29</span><span style="right:120px;color:#ff3c3c">23.22</span><span style="right:54px;color:#cc0">200</span><span style="left:192px;color:#0c0">S</span><span style="left:226px;color:#999">1</span></div>
<div class="row" style="top:1017px"><span style="left:2px;color:#ccc">11:29</span><span style="right:120px;color:#ff3c3c">23.22</span><span style="right:54px;color:#cc0">68</span><span style="left:192px;color:#0c0">S</span><span style="left:226px;color:#999">2</span></div>
<div class="row" style="top:1035px"><span style="left:2px;color:#ccc">11:29</span><span style="right:120px;color:#ff3c3c">23.22</span><span style="right:54px;color:#cc0">75</span><span style="left:192px;color:#0c0">S</span><span style="left:226px;color:#999">1</span></div>
<div class="row" style="top:1053px"><span style="left:2px;color:#ccc">11:29</span><span style="right:120px;color:#ff3c3c">23.22</span><span style="right:54px;color:#cc0">120</span><span style="left:192px;color:#0c0">S</span><span style="left:226px;color:#999">2</span></div>
</body></html>
